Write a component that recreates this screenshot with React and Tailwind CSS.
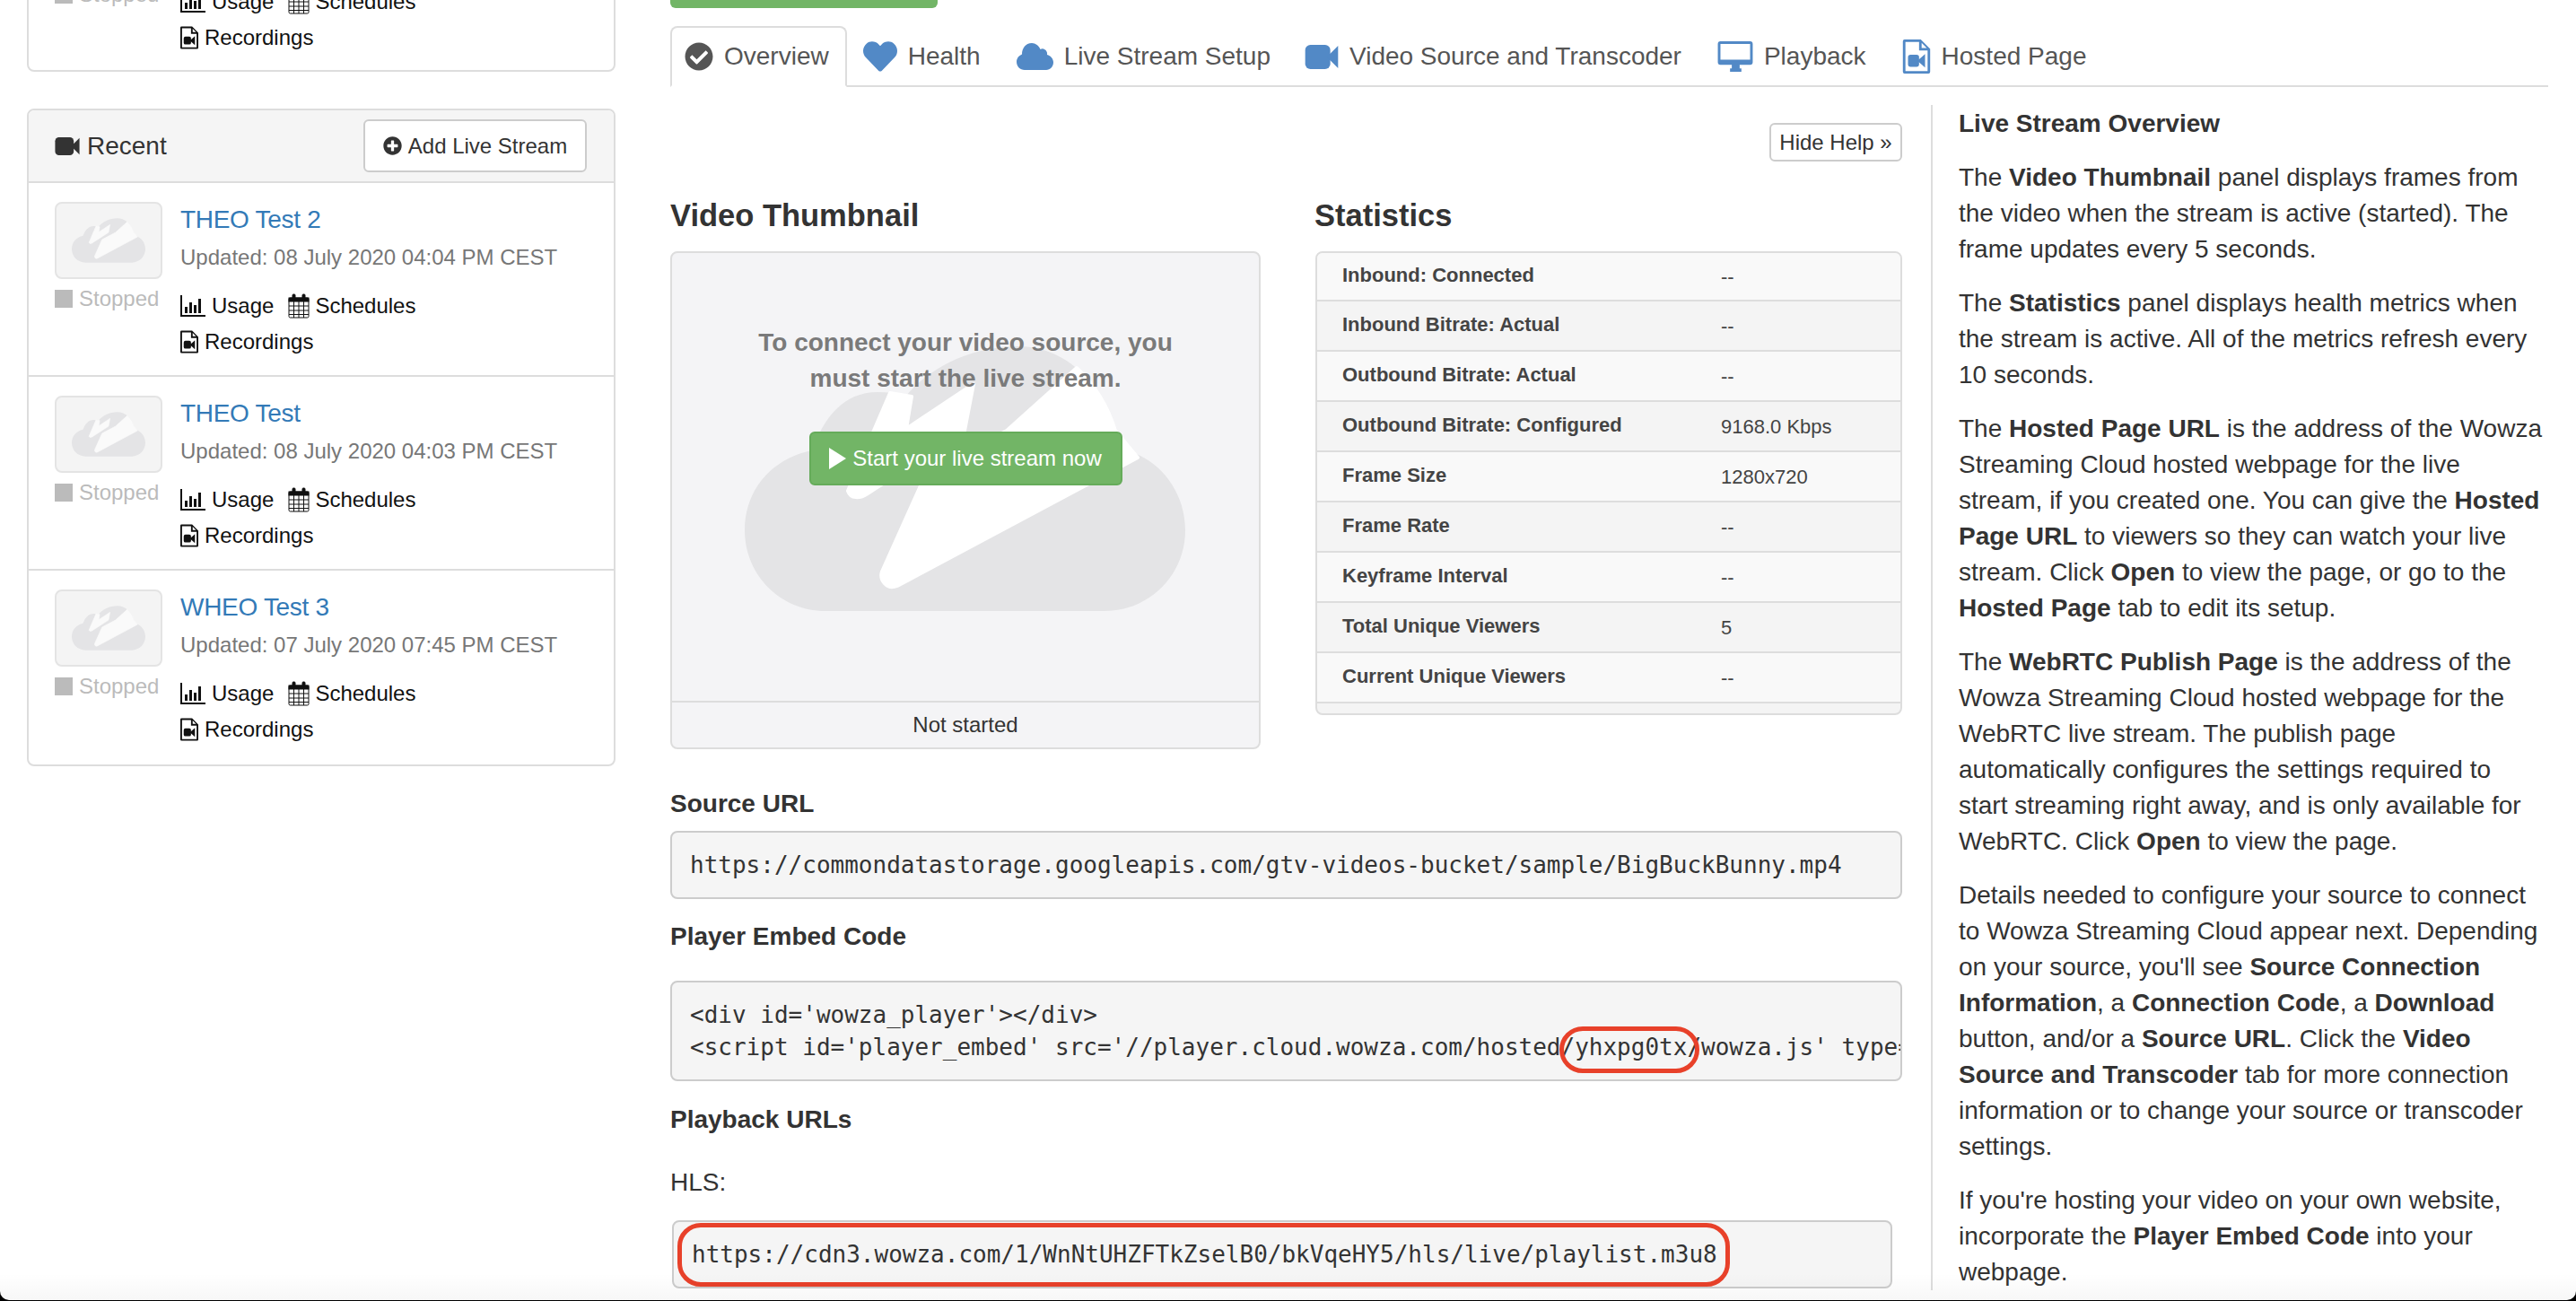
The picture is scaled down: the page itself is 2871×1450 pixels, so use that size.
import React from 'react';
import { FaCheckCircle, FaHeart, FaPlusCircle } from 'react-icons/fa';

const CloudLogo = ({ className, bolt }) => (
    <svg viewBox="0 0 491 295" className={className}>
        <path fill="#e4e4e6" d="M90 295C40 295 0 255 0 205C0 160 30 125 75 116C88 80 110 51 148 51C160 51 170 52 180 55C205 25 250 0 305 0C360 0 400 45 413 94L427 117C460 125 491 160 491 205C491 255 451 295 401 295Z" />
        <path fill={bolt} stroke={bolt} strokeWidth="4" strokeLinejoin="round" d="M292 94L370 24C392 45 405 68 413 94L438 124L170 267C158 272 150 260 153 251L202 142Z" />
        <path fill={bolt} stroke={bolt} strokeWidth="4" strokeLinejoin="round" d="M162 52L186 56L180 92L255 42L245 94L137 164C128 170 118 170 115 161Z" />
    </svg>
);

const VideoIcon = ({ className }) => (
    <svg viewBox="0 0 38 28" className={className} fill="currentColor">
        <rect x="0" y="0" width="29" height="28" rx="6" />
        <path d="M25 14L38 1V27Z" />
    </svg>
);

const CloudIcon = ({ className }) => (
    <svg viewBox="0 0 41 30" className={className} fill="currentColor">
        <path d="M9 30C4 30 0 26 0 21C0 17 2.5 14 6 12.5C6 6 10 0 17 0C21 0 25 3 26.5 7C28 6 30 6 31 7C33.5 8 34.5 11 34 13C38 14 41 17.5 41 21.5C41 26 37.5 30 33 30Z" />
    </svg>
);

const DesktopIcon = ({ className }) => (
    <svg viewBox="0 0 40 36" className={className} fill="currentColor">
        <path fillRule="evenodd" d="M3 0H37A3 3 0 0 1 40 3V24A3 3 0 0 1 37 27H25V31H27V35H14V31H16V27H3A3 3 0 0 1 0 24V3A3 3 0 0 1 3 0ZM3 3V21H37V3Z" />
    </svg>
);

const FileVideoIcon = ({ className }) => (
    <svg viewBox="0 0 32 40" className={className} fill="currentColor">
        <path fillRule="evenodd" d="M2 0H21L32 11V38A2 2 0 0 1 30 40H2A2 2 0 0 1 0 38V2A2 2 0 0 1 2 0ZM3 3V37H29V13H19V3ZM22 4V10H28Z" />
        <rect x="6" y="18" width="13" height="14" rx="3" />
        <path d="M17 25L26 17V33Z" />
    </svg>
);

const ChartIcon = ({ className }) => (
    <svg viewBox="0 0 28 24" className={className} fill="currentColor">
        <path d="M0 0H2V22H28V24H0Z" />
        <rect x="5" y="13" width="3" height="7" />
        <rect x="10" y="8" width="3" height="12" />
        <rect x="15" y="11" width="3" height="9" />
        <rect x="20" y="4" width="3" height="16" />
    </svg>
);

const CalendarIcon = ({ className }) => (
    <svg viewBox="0 0 24 28" className={className} fill="none" stroke="currentColor" strokeWidth="1">
        <rect x="1" y="5" width="22" height="22" rx="1.5" />
        <rect x="1" y="5" width="22" height="4" fill="currentColor" />
        <path d="M1 14H23M1 19H23M1 23.500H23M6.500 9V27M12 9V27M17.500 9V27" />
        <rect x="5" y="1" width="3" height="6" rx="1" fill="currentColor" />
        <rect x="16" y="1" width="3" height="6" rx="1" fill="currentColor" />
    </svg>
);

const StreamItem = ({ name, updated }) => (
    <div className="h-[216px] border-b-2 border-[#dddddd] pt-[21px] pl-[29px] flex last:border-b-0">
        <div className="w-[120px]">
            <div className="h-[86px] border-2 border-[#e4e4e4] bg-[#f4f4f4] rounded-[8px] flex items-center justify-center">
                <CloudLogo className="w-[82px] h-[50px]" bolt="#fafafa" />
            </div>
            <div className="flex items-center gap-[7px] mt-[7px] text-[24px] leading-[30px] text-[#bbbbbb]">
                <span className="w-[20px] h-[20px] bg-[#bbbbbb]"></span>
                <span>Stopped</span>
            </div>
        </div>
        <div className="ml-[20px] text-[24px] text-[#111111]">
            <a className="block text-[28px] leading-[40px] tracking-[-0.3px] text-[#337ab7]">{name}</a>
            <div className="mt-[5px] leading-[34px] text-[#777777]">Updated: {updated}</div>
            <div className="mt-[17px] h-[40px] flex items-center">
                <ChartIcon className="w-[28px] h-[24px] mr-[7px]" />
                <span>Usage</span>
                <CalendarIcon className="w-[24px] h-[28px] ml-[16px] mr-[6px]" />
                <span>Schedules</span>
            </div>
            <div className="h-[40px] flex items-center">
                <FileVideoIcon className="w-[20px] h-[26px] mr-[7px]" />
                <span>Recordings</span>
            </div>
        </div>
    </div>
);

const Tab = ({ icon, label, active, className }) => (
    <div className={`h-[68px] flex items-center gap-[12px] border-2 rounded-t-[8px] text-[28px] text-[#555555] -mb-[2px] ${active ? 'border-[#dddddd] border-b-white bg-white' : 'border-transparent'} ${className}`}>
        {icon}
        <span>{label}</span>
    </div>
);

const stats = [
    ['Inbound: Connected', '--'],
    ['Inbound Bitrate: Actual', '--'],
    ['Outbound Bitrate: Actual', '--'],
    ['Outbound Bitrate: Configured', '9168.0 Kbps'],
    ['Frame Size', '1280x720'],
    ['Frame Rate', '--'],
    ['Keyframe Interval', '--'],
    ['Total Unique Viewers', '5'],
    ['Current Unique Viewers', '--'],
];

const Code = ({ className, children }) => (
    <div className={`relative border-2 border-[#cccccc] rounded-[8px] bg-[#f5f5f5] px-[20px] py-[18px] font-['DejaVu_Sans_Mono',monospace] text-[26px] leading-[36px] text-[#333333] whitespace-pre ${className}`}>
        {children}
    </div>
);

const SectionLabel = ({ className, children }) => (
    <div className={`text-[28px] leading-[40px] font-bold text-[#333333] ${className}`}>{children}</div>
);

const App = () => {
    return (
        <div className="h-[1450px] bg-black overflow-hidden font-['Liberation_Sans',Arial,sans-serif]">
            <div className="relative h-[1449px] bg-white rounded-b-[10px] overflow-hidden flex">
                {/* left column */}
                <div className="w-[656px] ml-[30px] shrink-0">
                    <div className="-mt-[137px] h-[217px] border-2 border-[#dddddd] rounded-[8px] overflow-hidden">
                        <StreamItem name="THEO Test 3" updated="08 July 2020 04:04 PM CEST" />
                    </div>
                    <div className="mt-[41px] border-2 border-[#dddddd] rounded-[8px] overflow-hidden">
                        <div className="h-[81px] bg-[#f5f5f5] border-b-2 border-[#dddddd] pl-[29px] pr-[30px] flex items-center justify-between">
                            <div className="flex items-center gap-[8px] text-[28px] text-[#333333]">
                                <VideoIcon className="w-[28px] h-[20px]" />
                                <span>Recent</span>
                            </div>
                            <div className="w-[249px] h-[59px] bg-white border-2 border-[#cccccc] rounded-[6px] flex items-center justify-center gap-[7px] text-[24px] text-[#333333]">
                                <FaPlusCircle className="w-[21px] h-[21px]" />
                                <span>Add Live Stream</span>
                            </div>
                        </div>
                        <StreamItem name="THEO Test 2" updated="08 July 2020 04:04 PM CEST" />
                        <StreamItem name="THEO Test" updated="08 July 2020 04:03 PM CEST" />
                        <StreamItem name="WHEO Test 3" updated="07 July 2020 07:45 PM CEST" />
                    </div>
                </div>

                {/* main column */}
                <div className="ml-[61px] w-[2093px] shrink-0">
                    <div className="w-[298px] h-[9px] bg-[#72b566] rounded-b-[6px]"></div>
                    <div className="mt-[20px] flex border-b-2 border-[#dddddd]">
                        <Tab active className="pl-[14px] pr-[18px]" label="Overview" icon={<FaCheckCircle className="w-[32px] h-[32px] text-[#555555]" />} />
                        <Tab className="pl-[16px] pr-[18px]" label="Health" icon={<FaHeart className="w-[38px] h-[38px] text-[#5289c6]" />} />
                        <Tab className="pl-[18px] pr-[16px]" label="Live Stream Setup" icon={<CloudIcon className="w-[41px] h-[30px] text-[#5289c6]" />} />
                        <Tab className="pl-[18px] pr-[18px] gap-[10px]" label="Video Source and Transcoder" icon={<VideoIcon className="w-[38px] h-[27px] text-[#5289c6]" />} />
                        <Tab className="pl-[18px] pr-[16px]" label="Playback" icon={<DesktopIcon className="w-[40px] h-[35px] text-[#5289c6]" />} />
                        <Tab className="pl-[20px] pr-[18px]" label="Hosted Page" icon={<FileVideoIcon className="w-[32px] h-[38px] text-[#5289c6]" />} />
                    </div>

                    <div className="flex">
                        <div className="w-[1373px] shrink-0">
                            <div className="flex justify-end mt-[40px]">
                                <div className="w-[148px] h-[43px] border-2 border-[#cccccc] rounded-[6px] flex items-center justify-center text-[24px] text-[#333333]">
                                    Hide Help »
                                </div>
                            </div>

                            <div className="flex mt-[40px]">
                                <div className="w-[658px]">
                                    <h3 className="text-[34.500px] leading-[40px] font-bold text-[#333333]">Video Thumbnail</h3>
                                    <div className="relative mt-[20px] h-[555px] border-2 border-[#dddddd] rounded-[8px] bg-[#f4f4f6] overflow-hidden flex flex-col">
                                        <div className="absolute left-[81px] top-[104px]">
                                            <CloudLogo className="w-[491px] h-[295px]" bolt="#ffffff" />
                                        </div>
                                        <div className="relative flex-1 flex flex-col items-center pt-[80px]">
                                            <p className="w-[520px] text-center text-[28px] leading-[40px] font-bold text-[#7a7a7a]">
                                                To connect your video source, you must start the live stream.
                                            </p>
                                            <div className="mt-[39px] w-[349px] h-[60px] bg-[#72b566] border-2 border-[#65ab5a] rounded-[6px] flex items-center justify-center gap-[7px] text-[24px] text-white">
                                                <svg viewBox="0 0 19 24" className="w-[19px] h-[24px]" fill="currentColor"><path d="M0 0L19 12L0 24Z" /></svg>
                                                <span>Start your live stream now</span>
                                            </div>
                                        </div>
                                        <div className="h-[52px] border-t-2 border-[#dddddd] relative flex items-center justify-center text-[24px] text-[#333333]">
                                            Not started
                                        </div>
                                    </div>
                                </div>

                                <div className="ml-[61px] w-[654px]">
                                    <h3 className="-ml-[1px] text-[34.500px] leading-[40px] font-bold text-[#333333]">Statistics</h3>
                                    <div className="mt-[20px] h-[517px] border-2 border-[#dddddd] rounded-[8px] bg-[#f4f4f4] overflow-hidden">
                                        {stats.map(([label, value]) => (
                                            <div key={label} className="h-[56px] first:h-[54px] border-b-2 border-[#dddddd] pl-[28px] flex items-center text-[22px] text-[#444444] odd:bg-[#f9f9f9] even:bg-[#f4f4f4]">
                                                <span className="w-[422px] font-bold -mt-[3px]">{label}</span>
                                                <span>{value}</span>
                                            </div>
                                        ))}
                                    </div>
                                </div>
                            </div>

                            <SectionLabel className="mt-[41px]">Source URL</SectionLabel>
                            <Code className="mt-[10px]">https://commondatastorage.googleapis.com/gtv-videos-bucket/sample/BigBuckBunny.mp4</Code>
                            <SectionLabel className="mt-[22px]">Player Embed Code</SectionLabel>
                            <Code className="mt-[29px] overflow-x-clip">
                                {"<div id='wowza_player'></div>\n<script id='player_embed' src='//player.cloud.wowza.com/hosted/yhxpg0tx/wowza.js' type='text/javascript'></script>"}
                                <span className="absolute left-[989px] top-[49px] w-[156px] h-[52px] border-[5px] border-[#e8412a] rounded-[26px]"></span>
                            </Code>
                            <SectionLabel className="mt-[23px]">Playback URLs</SectionLabel>
                            <div className="mt-[30px] text-[28px] leading-[40px] text-[#333333]">HLS:</div>
                            <Code className="mt-[22px] ml-[2px] mr-[11px]">
                                https://cdn3.wowza.com/1/WnNtUHZFTkZselB0/bkVqeHY5/hls/live/playlist.m3u8
                                <span className="absolute left-[4px] top-[1px] w-[1173px] h-[71px] border-[5px] border-[#e8412a] rounded-[26px]"></span>
                            </Code>
                        </div>

                        <div className="ml-[32px] mt-[20px] pt-[1px] pl-[29px] w-[684px] border-l-2 border-[#dddddd] text-[28px] leading-[40px] text-[#333333]">
                            <p className="font-bold mb-[20px]">Live Stream Overview</p>
                            <p className="mb-[20px]">The <b>Video Thumbnail</b> panel displays frames from the video when the stream is active (started). The frame updates every 5 seconds.</p>
                            <p className="mb-[20px]">The <b>Statistics</b> panel displays health metrics when the stream is active. All of the metrics refresh every 10 seconds.</p>
                            <p className="mb-[20px]">The <b>Hosted Page URL</b> is the address of the Wowza Streaming Cloud hosted webpage for the live stream, if you created one. You can give the <b>Hosted Page URL</b> to viewers so they can watch your live stream. Click <b>Open</b> to view the page, or go to the <b>Hosted Page</b> tab to edit its setup.</p>
                            <p className="mb-[20px]">The <b>WebRTC Publish Page</b> is the address of the Wowza Streaming Cloud hosted webpage for the WebRTC live stream. The publish page automatically configures the settings required to start streaming right away, and is only available for WebRTC. Click <b>Open</b> to view the page.</p>
                            <p className="mb-[20px]">Details needed to configure your source to connect to Wowza Streaming Cloud appear next. Depending on your source, you'll see <b>Source Connection Information</b>, a <b>Connection Code</b>, a <b>Download</b> button, and/or a <b>Source URL</b>. Click the <b>Video Source and Transcoder</b> tab for more connection information or to change your source or transcoder settings.</p>
                            <p>If you're hosting your video on your own website, incorporate the <b>Player Embed Code</b> into your webpage.</p>
                        </div>
                    </div>
                </div>
                <div className="absolute inset-x-0 bottom-0 h-[30px] bg-gradient-to-b from-transparent to-[#00000008] pointer-events-none"></div>
            </div>
        </div>
    );
};

export default App;
